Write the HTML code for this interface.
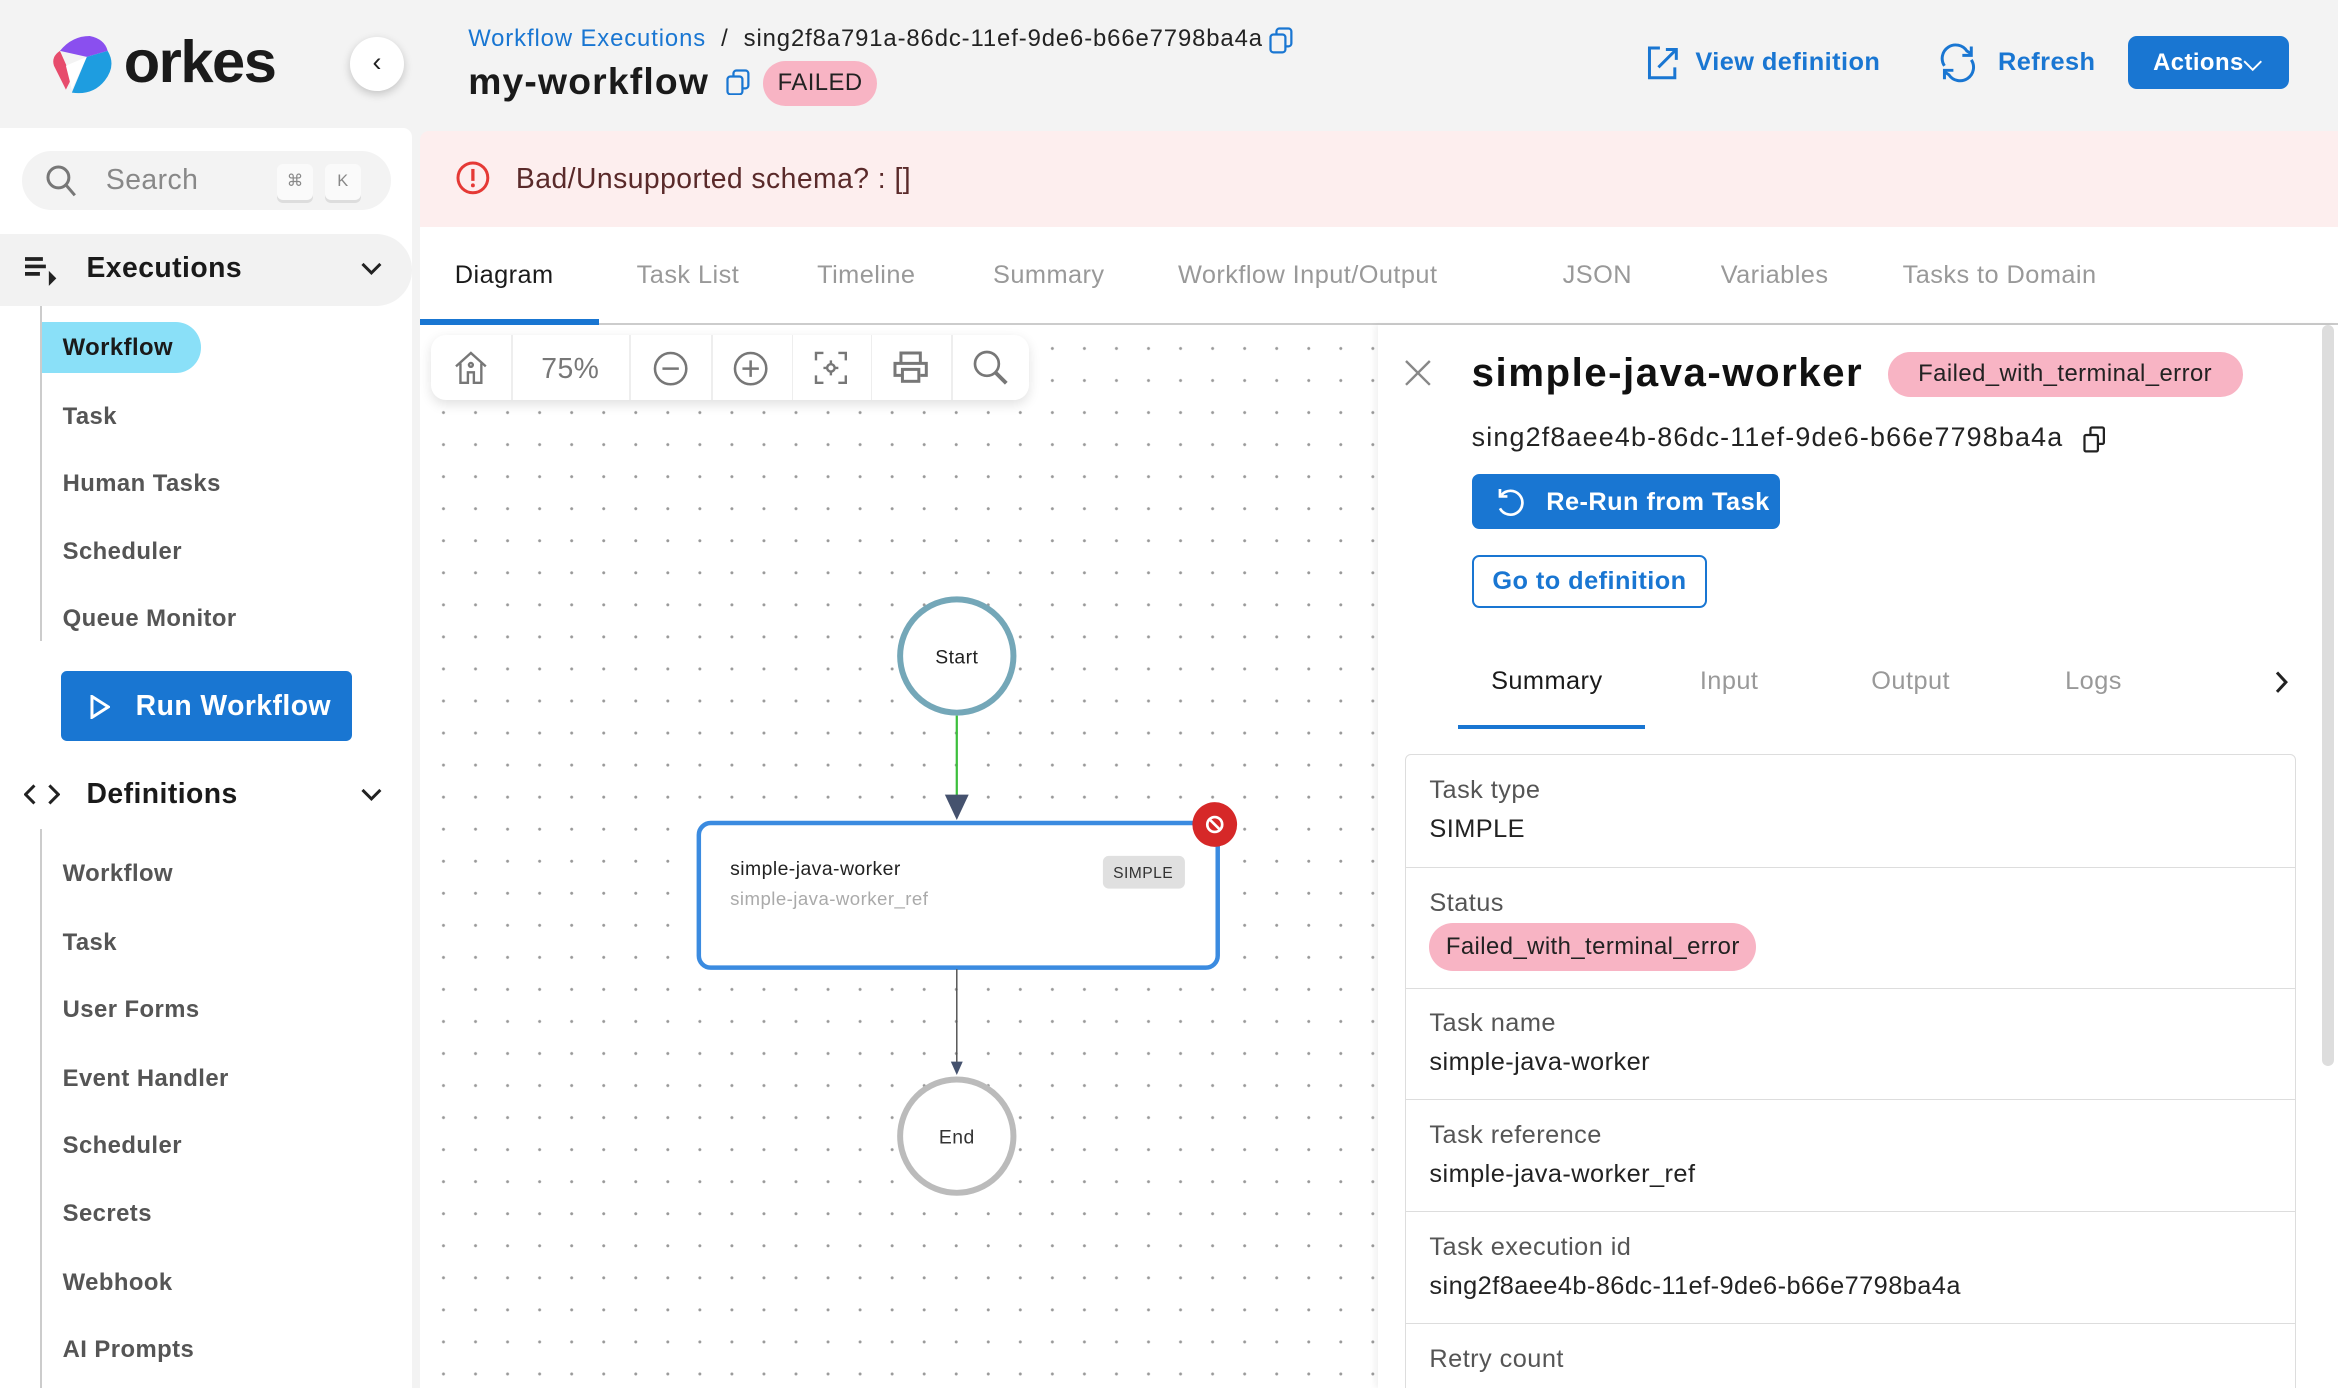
<!DOCTYPE html><html><head><meta charset="utf-8"><style>
*{box-sizing:border-box;margin:0;padding:0}
html,body{width:2338px;height:1388px;overflow:hidden;background:#f3f3f3}
#w{zoom:1.49107;width:1568px;height:931px;position:relative;font-family:"Liberation Sans",sans-serif;overflow:hidden;letter-spacing:0.3px}
.a{position:absolute;white-space:nowrap}
.side{font-size:16px;color:#555;font-weight:bold;left:42px}
.tab{top:175px;font-size:17px;color:#999}
.row{position:absolute;left:942px;width:598px;border:1px solid #ddd;border-top:none;background:#fff}
.lbl{position:absolute;left:16px;top:14px;font-size:17px;color:#555}
.val{position:absolute;left:16px;top:40px;font-size:17px;color:#222}
</style></head><body><div id="w">
<svg class="a" style="left:34px;top:22px" width="44" height="44" viewBox="0 0 44 44"><path d="M10 38 L2 22 Q0 16 6 12 L14 30 Z" fill="#e74c6c"/><path d="M6 12 Q14 2 26 2 Q36 4 38 12 L24 16 Z" fill="#8a4fef"/><path d="M38 12 Q44 22 36 32 Q28 42 14 40 L24 16 Z" fill="#1e9de0"/><path d="M24 16 L14 38 L10 22 Z" fill="#fff"/></svg>
<div class="a" style="left:83px;top:18px;font-size:40px;font-weight:bold;color:#1a1a1a;letter-spacing:-1px">orkes</div>
<div class="a" style="left:235px;top:25px;width:36px;height:36px;border-radius:50%;background:#fff;box-shadow:0 2px 6px rgba(0,0,0,.2);text-align:center;line-height:34px;font-size:18px;color:#222">‹</div>
<div class="a" style="left:314px;top:17px;font-size:16px;color:#1976d2;letter-spacing:0.6px">Workflow Executions <span style="color:#222">&nbsp;/&nbsp; sing2f8a791a-86dc-11ef-9de6-b66e7798ba4a</span></div>
<svg class="a" style="left:851px;top:18px" width="17" height="18"><rect x="5" y="1" width="10" height="12" rx="2" fill="none" stroke="#1976d2" stroke-width="1.5"/><rect x="1" y="5" width="10" height="12" rx="2" fill="#f3f3f3" stroke="#1976d2" stroke-width="1.5"/></svg>
<div class="a" style="left:314px;top:40px;font-size:25px;font-weight:bold;color:#1a1a1a;letter-spacing:0.8px">my-workflow</div>
<svg class="a" style="left:487px;top:46px" width="17" height="18"><rect x="5" y="1" width="10" height="12" rx="2" fill="none" stroke="#1976d2" stroke-width="1.5"/><rect x="1" y="5" width="10" height="12" rx="2" fill="#f3f3f3" stroke="#1976d2" stroke-width="1.5"/></svg>
<div class="a" style="left:512px;top:41px;width:76px;height:30px;border-radius:15px;background:#f8b4c4;font-size:16px;text-align:center;line-height:30px;color:#222">FAILED</div>
<svg class="a" style="left:1103px;top:30px" width="24" height="24" viewBox="0 0 24 24" fill="none" stroke="#1976d2" stroke-width="2"><path d="M10 2H3v20h17v-7"/><path d="M9 15L21 3M14 3h7v7"/></svg>
<div class="a" style="left:1137px;top:32px;font-size:17px;font-weight:bold;color:#1976d2">View definition</div>
<svg class="a" style="left:1299px;top:28px" width="28" height="28" viewBox="0 0 28 28" fill="none" stroke="#1976d2" stroke-width="2"><path d="M5 16A9 9 0 0 1 20 6l3 2M23 12a9 9 0 0 1-15 10l-3-2"/><path d="M23 3v6h-6M5 25v-6h6" /></svg>
<div class="a" style="left:1340px;top:32px;font-size:17px;font-weight:bold;color:#1976d2">Refresh</div>
<div class="a" style="left:1427px;top:24px;width:108px;height:36px;border-radius:6px;background:#1976d2;color:#fff;font-size:16px;font-weight:bold;line-height:36px;padding-left:17px">Actions⌵</div>
<div class="a" style="left:0;top:86px;width:276px;height:860px;background:#fff;border-radius:0 6px 0 0"></div>
<div class="a" style="left:15px;top:101px;width:247px;height:40px;border-radius:20px;background:#f3f3f3"></div>
<svg class="a" style="left:30px;top:110px" width="22" height="22" fill="none" stroke="#777" stroke-width="2"><circle cx="9" cy="9" r="7"/><path d="M14 14l6 7"/></svg>
<div class="a" style="left:71px;top:110px;font-size:19px;color:#888">Search</div>
<div class="a" style="left:186px;top:110px;width:24px;height:24px;border-radius:4px;background:#fafafa;box-shadow:0 2px 0 #ddd;font-size:11px;color:#888;text-align:center;line-height:24px">⌘</div>
<div class="a" style="left:218px;top:110px;width:24px;height:24px;border-radius:4px;background:#fafafa;box-shadow:0 2px 0 #ddd;font-size:11px;color:#888;text-align:center;line-height:24px">K</div>
<div class="a" style="left:0;top:157px;width:276px;height:48px;background:#f2f2f2;border-radius:0 24px 24px 0"></div>
<svg class="a" style="left:17px;top:172px" width="24" height="20"><path d="M0 2h12M0 7h14M0 12h10" stroke="#222" stroke-width="2.5"/><path d="M16 10l5 5-5 5z" fill="#222"/></svg>
<div class="a" style="left:58px;top:169px;font-size:19px;font-weight:bold;color:#1a1a1a">Executions</div>
<svg class="a" style="left:242px;top:175px" width="14" height="10" fill="none" stroke="#222" stroke-width="2"><path d="M1 2l6 6 6-6"/></svg>
<div class="a" style="left:27px;top:205px;width:1px;height:225px;background:#ccc"></div>
<div class="a" style="left:28px;top:216px;width:107px;height:34px;border-radius:0 17px 17px 0;background:#8ae0f8"></div>
<div class="a side" style="top:224px;color:#1a1a1a">Workflow</div>
<div class="a side" style="top:270px">Task</div>
<div class="a side" style="top:315px">Human Tasks</div>
<div class="a side" style="top:361px">Scheduler</div>
<div class="a side" style="top:406px">Queue Monitor</div>
<div class="a" style="left:41px;top:450px;width:195px;height:47px;border-radius:4px;background:#1976d2"></div>
<svg class="a" style="left:60px;top:466px" width="14" height="16"><path d="M2 1l11 7-11 7z" fill="none" stroke="#fff" stroke-width="2"/></svg>
<div class="a" style="left:91px;top:463px;font-size:19px;font-weight:bold;color:#fff">Run Workflow</div>
<svg class="a" style="left:16px;top:526px" width="24" height="14" fill="none" stroke="#222" stroke-width="2"><path d="M7 1L1 7l6 6M17 1l6 6-6 6"/></svg>
<div class="a" style="left:58px;top:522px;font-size:19px;font-weight:bold;color:#1a1a1a">Definitions</div>
<svg class="a" style="left:242px;top:528px" width="14" height="10" fill="none" stroke="#222" stroke-width="2"><path d="M1 2l6 6 6-6"/></svg>
<div class="a" style="left:27px;top:556px;width:1px;height:380px;background:#ccc"></div>
<div class="a side" style="top:577px">Workflow</div>
<div class="a side" style="top:623px">Task</div>
<div class="a side" style="top:668px">User Forms</div>
<div class="a side" style="top:714px">Event Handler</div>
<div class="a side" style="top:759px">Scheduler</div>
<div class="a side" style="top:805px">Secrets</div>
<div class="a side" style="top:851px">Webhook</div>
<div class="a side" style="top:896px">AI Prompts</div>
<div class="a" style="left:282px;top:88px;width:1286px;height:64px;background:#fdeeee;border-radius:6px 0 0 0"></div>
<svg class="a" style="left:305px;top:107px" width="24" height="24"><circle cx="12" cy="12" r="10" fill="none" stroke="#e53935" stroke-width="2"/><path d="M12 6v8" stroke="#e53935" stroke-width="2.2"/><circle cx="12" cy="17" r="1.3" fill="#e53935"/></svg>
<div class="a" style="left:346px;top:109px;font-size:19px;color:#5a2a2a">Bad/Unsupported schema? : []</div>
<div class="a" style="left:282px;top:152px;width:1286px;height:66px;background:#fff;border-bottom:2px solid #ccc"></div>
<div class="a" style="left:282px;top:214px;width:120px;height:4px;background:#1976d2"></div>
<div class="a tab" style="left:305px;color:#1a1a1a">Diagram</div>
<div class="a tab" style="left:427px">Task List</div>
<div class="a tab" style="left:548px">Timeline</div>
<div class="a tab" style="left:666px">Summary</div>
<div class="a tab" style="left:790px">Workflow Input/Output</div>
<div class="a tab" style="left:1048px">JSON</div>
<div class="a tab" style="left:1154px">Variables</div>
<div class="a tab" style="left:1276px">Tasks to Domain</div>
<div class="a" style="left:282px;top:218px;width:642px;height:713px;background-color:#fff;background-image:radial-gradient(circle,#999 0.8px,transparent 1.2px);background-size:21.5px 21.5px;background-position:5px 5px"></div>
<div class="a" style="left:289px;top:225px;width:401px;height:43px;background:#fff;border-radius:10px;box-shadow:0 3px 8px rgba(0,0,0,.12)"></div>
<div class="a" style="left:343px;top:225px;width:1px;height:43px;background:#eee"></div>
<div class="a" style="left:422px;top:225px;width:1px;height:43px;background:#eee"></div>
<div class="a" style="left:477px;top:225px;width:1px;height:43px;background:#eee"></div>
<div class="a" style="left:531px;top:225px;width:1px;height:43px;background:#eee"></div>
<div class="a" style="left:584px;top:225px;width:1px;height:43px;background:#eee"></div>
<div class="a" style="left:638px;top:225px;width:1px;height:43px;background:#eee"></div>
<svg class="a" style="left:304px;top:235px" width="24" height="24" fill="none" stroke="#777" stroke-width="1.6"><path d="M2 11L12 2l10 9M5 9v13h5v-7h4v7h5V9"/><circle cx="12" cy="10" r="1.3"/></svg>
<div class="a" style="left:363px;top:237px;font-size:19px;color:#777">75%</div>
<svg class="a" style="left:437px;top:235px" width="25" height="25" fill="none" stroke="#777" stroke-width="1.7"><circle cx="12.5" cy="12.5" r="10.5"/><path d="M7 12.5h11"/></svg>
<svg class="a" style="left:491px;top:235px" width="25" height="25" fill="none" stroke="#777" stroke-width="1.7"><circle cx="12.5" cy="12.5" r="10.5"/><path d="M7 12.5h11M12.5 7v11"/></svg>
<svg class="a" style="left:545px;top:235px" width="24" height="24" fill="none" stroke="#777" stroke-width="1.6"><path d="M2 7V2h5M17 2h5v5M22 17v5h-5M7 22H2v-5"/><circle cx="12" cy="12" r="2.5"/><path d="M12 7v2.5M12 14.5V17M7 12h2.5M14.5 12H17"/></svg>
<svg class="a" style="left:598px;top:235px" width="25" height="24" fill="none" stroke="#777" stroke-width="2"><path d="M6 8V2h13v6M6 17H2V9h21v8h-4"/><rect x="7" y="13" width="11" height="8"/></svg>
<svg class="a" style="left:652px;top:234px" width="25" height="25" fill="none" stroke="#777" stroke-width="1.8"><circle cx="10" cy="10" r="8"/><path d="M16 16l7 7" stroke-width="2.6"/></svg>
<svg class="a" style="left:282px;top:218px" width="642" height="713">
<circle cx="360" cy="222" r="38" fill="#fff" stroke="#74a7b8" stroke-width="4"/>
<text x="360" y="227" font-size="13" text-anchor="middle" fill="#222" font-family="Liberation Sans">Start</text>
<line x1="360" y1="262" x2="360" y2="318" stroke="#3cbf3c" stroke-width="1.5"/>
<path d="M352 315h16l-8 17z" fill="#45526e"/>
<rect x="187" y="334" width="348" height="97" rx="8" fill="#fff" stroke="#3b8be0" stroke-width="3"/>
<text x="208" y="369" font-size="13" fill="#222" font-family="Liberation Sans">simple-java-worker</text>
<text x="208" y="389" font-size="12.5" fill="#aaa" font-family="Liberation Sans">simple-java-worker_ref</text>
<rect x="458" y="356" width="55" height="22" rx="4" fill="#e0e0e0"/>
<text x="485" y="371" font-size="10.5" fill="#333" text-anchor="middle" font-family="Liberation Sans">SIMPLE</text>
<circle cx="533" cy="335" r="15" fill="#d62828"/>
<circle cx="533" cy="335" r="5" fill="none" stroke="#fff" stroke-width="1.8"/><path d="M530 332l6 6" stroke="#fff" stroke-width="1.8"/>
<line x1="360" y1="432" x2="360" y2="496" stroke="#555" stroke-width="1"/>
<path d="M356 494h8l-4 9z" fill="#45526e"/>
<circle cx="360" cy="544" r="38" fill="#fff" stroke="#bbb" stroke-width="4"/>
<text x="360" y="549" font-size="13" text-anchor="middle" fill="#333" font-family="Liberation Sans">End</text>
</svg>
<div class="a" style="left:924px;top:218px;width:644px;height:713px;background:#fff;box-shadow:-2px 0 4px rgba(0,0,0,.06)"></div>
<div class="a" style="left:1557px;top:218px;width:8px;height:497px;background:#ddd;border-radius:4px"></div>
<svg class="a" style="left:941px;top:240px" width="20" height="20" stroke="#888" stroke-width="1.6"><path d="M2 2l16 16M18 2L2 18"/></svg>
<div class="a" style="left:987px;top:235px;font-size:27px;font-weight:bold;color:#111;letter-spacing:1px">simple-java-worker</div>
<div class="a" style="left:1266px;top:236px;width:238px;height:30px;border-radius:15px;background:#f8b4c4;font-size:16px;color:#222;text-align:center;line-height:30px">Failed_with_terminal_error</div>
<div class="a" style="left:987px;top:283px;font-size:18px;color:#222;letter-spacing:0.8px">sing2f8aee4b-86dc-11ef-9de6-b66e7798ba4a</div>
<svg class="a" style="left:1397px;top:286px" width="16" height="18" fill="none" stroke="#222" stroke-width="1.5"><rect x="5" y="1" width="9" height="11" rx="1"/><rect x="1" y="6" width="9" height="11" rx="1" fill="#fff"/></svg>
<div class="a" style="left:987px;top:318px;width:207px;height:37px;border-radius:5px;background:#1976d2"></div>
<svg class="a" style="left:1002px;top:326px" width="22" height="22" fill="none" stroke="#fff" stroke-width="1.8"><path d="M5 6a8 8 0 1 1-1 9"/><path d="M4 2v5h5"/></svg>
<div class="a" style="left:1037px;top:327px;font-size:17px;font-weight:bold;color:#fff">Re-Run from Task</div>
<div class="a" style="left:987px;top:372px;width:158px;height:36px;border-radius:5px;border:1.5px solid #1976d2;background:#fff;font-size:17px;font-weight:bold;color:#1976d2;text-align:center;line-height:33px">Go to definition</div>
<div class="a" style="left:1000px;top:447px;font-size:17px;color:#1a1a1a">Summary</div>
<div class="a" style="left:1140px;top:447px;font-size:17px;color:#999">Input</div>
<div class="a" style="left:1255px;top:447px;font-size:17px;color:#999">Output</div>
<div class="a" style="left:1385px;top:447px;font-size:17px;color:#999">Logs</div>
<svg class="a" style="left:1525px;top:450px" width="10" height="15" fill="none" stroke="#222" stroke-width="2"><path d="M2 1l6 6.5L2 14"/></svg>
<div class="a" style="left:978px;top:486px;width:125px;height:3px;background:#1976d2"></div>
<div class="row" style="top:506px;height:76px;border-top:1px solid #ddd;border-radius:4px 4px 0 0"><div class="lbl">Task type</div><div class="val">SIMPLE</div></div>
<div class="row" style="top:582px;height:81px"><div class="lbl">Status</div><div class="a" style="left:16px;top:37px;height:32px;padding:0 11px;border-radius:16px;background:#f8b4c4;font-size:16px;line-height:32px;color:#222">Failed_with_terminal_error</div></div>
<div class="row" style="top:663px;height:75px"><div class="lbl">Task name</div><div class="val">simple-java-worker</div></div>
<div class="row" style="top:738px;height:75px"><div class="lbl">Task reference</div><div class="val">simple-java-worker_ref</div></div>
<div class="row" style="top:813px;height:75px"><div class="lbl">Task execution id</div><div class="val">sing2f8aee4b-86dc-11ef-9de6-b66e7798ba4a</div></div>
<div class="row" style="top:888px;height:60px"><div class="lbl">Retry count</div></div>
</div></body></html>
